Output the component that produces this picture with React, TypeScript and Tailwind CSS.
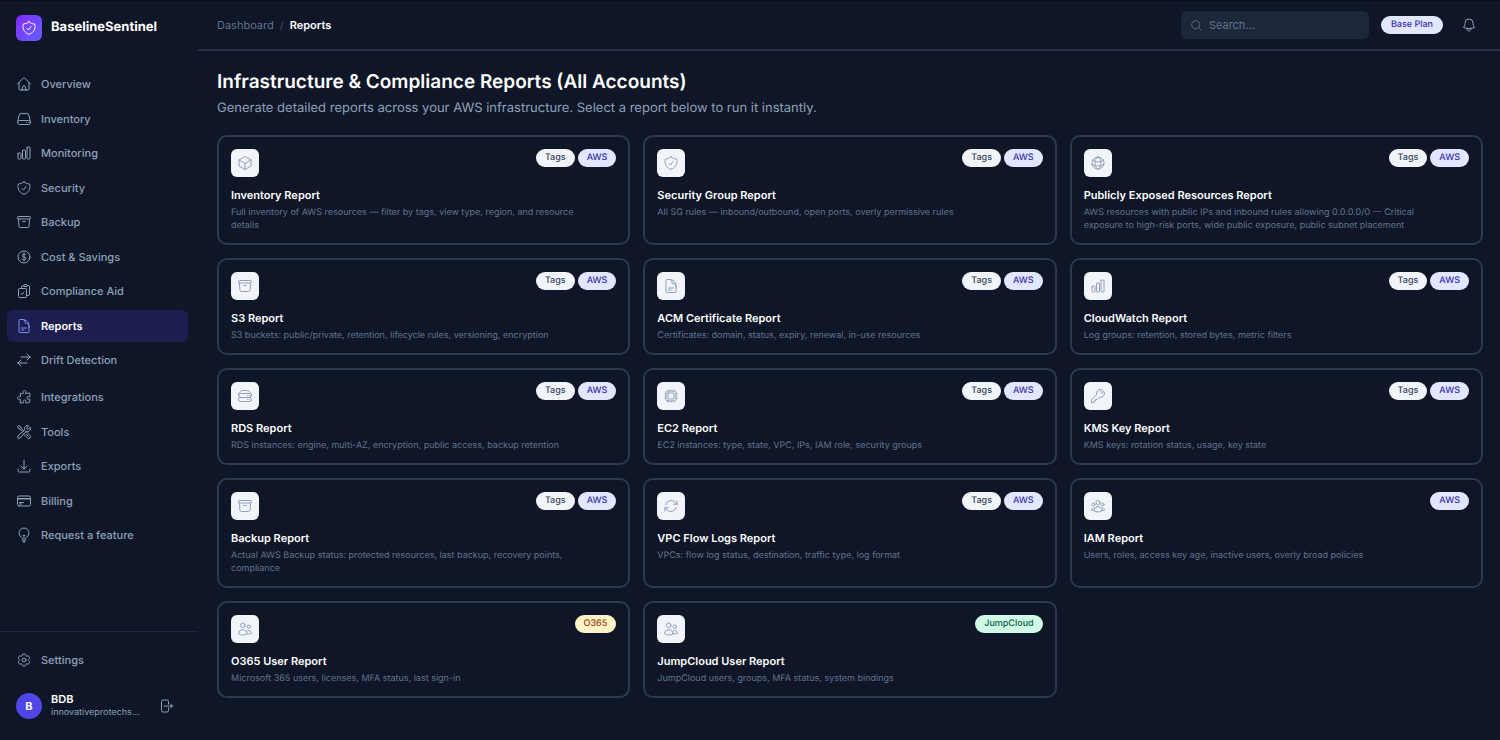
import type { IconType } from "react-icons";
import {
  HiOutlineArchiveBox,
  HiOutlineArrowDownTray,
  HiOutlineArrowPath,
  HiOutlineArrowRightOnRectangle,
  HiOutlineArrowsRightLeft,
  HiOutlineBell,
  HiOutlineChartBar,
  HiOutlineClipboardDocumentCheck,
  HiOutlineCog6Tooth,
  HiOutlineCpuChip,
  HiOutlineCreditCard,
  HiOutlineCube,
  HiOutlineCurrencyDollar,
  HiOutlineDocumentText,
  HiOutlineGlobeAlt,
  HiOutlineHome,
  HiOutlineKey,
  HiOutlineLightBulb,
  HiOutlineMagnifyingGlass,
  HiOutlinePuzzlePiece,
  HiOutlineServer,
  HiOutlineServerStack,
  HiOutlineShieldCheck,
  HiOutlineUserGroup,
  HiOutlineUsers,
  HiOutlineWrenchScrewdriver,
} from "react-icons/hi2";

type NavEntry = { label: string; icon: IconType; active?: boolean };

const primaryNav: NavEntry[] = [
  { label: "Overview", icon: HiOutlineHome },
  { label: "Inventory", icon: HiOutlineServer },
  { label: "Monitoring", icon: HiOutlineChartBar },
  { label: "Security", icon: HiOutlineShieldCheck },
  { label: "Backup", icon: HiOutlineArchiveBox },
  { label: "Cost & Savings", icon: HiOutlineCurrencyDollar },
  { label: "Compliance Aid", icon: HiOutlineClipboardDocumentCheck },
  { label: "Reports", icon: HiOutlineDocumentText, active: true },
  { label: "Drift Detection", icon: HiOutlineArrowsRightLeft },
];

const secondaryNav: NavEntry[] = [
  { label: "Integrations", icon: HiOutlinePuzzlePiece },
  { label: "Tools", icon: HiOutlineWrenchScrewdriver },
  { label: "Exports", icon: HiOutlineArrowDownTray },
  { label: "Billing", icon: HiOutlineCreditCard },
  { label: "Request a feature", icon: HiOutlineLightBulb },
];

type Tag = "Tags" | "AWS" | "O365" | "JumpCloud";

const tagStyles: Record<Tag, string> = {
  Tags: "bg-slate-100 text-slate-700",
  AWS: "bg-indigo-100 text-[#3730a3]",
  O365: "bg-amber-100 text-[#92400e]",
  JumpCloud: "bg-emerald-100 text-[#065f46]",
};

type Report = { title: string; text: string; icon: IconType; tags: Tag[] };

const reports: Report[] = [
  {
    title: "Inventory Report",
    text: "Full inventory of AWS resources — filter by tags, view type, region, and resource details",
    icon: HiOutlineCube,
    tags: ["Tags", "AWS"],
  },
  {
    title: "Security Group Report",
    text: "All SG rules — inbound/outbound, open ports, overly permissive rules",
    icon: HiOutlineShieldCheck,
    tags: ["Tags", "AWS"],
  },
  {
    title: "Publicly Exposed Resources Report",
    text: "AWS resources with public IPs and inbound rules allowing 0.0.0.0/0 — Critical exposure to high-risk ports, wide public exposure, public subnet placement",
    icon: HiOutlineGlobeAlt,
    tags: ["Tags", "AWS"],
  },
  {
    title: "S3 Report",
    text: "S3 buckets: public/private, retention, lifecycle rules, versioning, encryption",
    icon: HiOutlineArchiveBox,
    tags: ["Tags", "AWS"],
  },
  {
    title: "ACM Certificate Report",
    text: "Certificates: domain, status, expiry, renewal, in-use resources",
    icon: HiOutlineDocumentText,
    tags: ["Tags", "AWS"],
  },
  {
    title: "CloudWatch Report",
    text: "Log groups: retention, stored bytes, metric filters",
    icon: HiOutlineChartBar,
    tags: ["Tags", "AWS"],
  },
  {
    title: "RDS Report",
    text: "RDS instances: engine, multi-AZ, encryption, public access, backup retention",
    icon: HiOutlineServerStack,
    tags: ["Tags", "AWS"],
  },
  {
    title: "EC2 Report",
    text: "EC2 instances: type, state, VPC, IPs, IAM role, security groups",
    icon: HiOutlineCpuChip,
    tags: ["Tags", "AWS"],
  },
  {
    title: "KMS Key Report",
    text: "KMS keys: rotation status, usage, key state",
    icon: HiOutlineKey,
    tags: ["Tags", "AWS"],
  },
  {
    title: "Backup Report",
    text: "Actual AWS Backup status: protected resources, last backup, recovery points, compliance",
    icon: HiOutlineArchiveBox,
    tags: ["Tags", "AWS"],
  },
  {
    title: "VPC Flow Logs Report",
    text: "VPCs: flow log status, destination, traffic type, log format",
    icon: HiOutlineArrowPath,
    tags: ["Tags", "AWS"],
  },
  {
    title: "IAM Report",
    text: "Users, roles, access key age, inactive users, overly broad policies",
    icon: HiOutlineUserGroup,
    tags: ["AWS"],
  },
  {
    title: "O365 User Report",
    text: "Microsoft 365 users, licenses, MFA status, last sign-in",
    icon: HiOutlineUsers,
    tags: ["O365"],
  },
  {
    title: "JumpCloud User Report",
    text: "JumpCloud users, groups, MFA status, system bindings",
    icon: HiOutlineUsers,
    tags: ["JumpCloud"],
  },
];

function NavLink({ label, icon: Icon, active }: NavEntry) {
  return (
    <a
      href="#"
      aria-current={active ? "page" : undefined}
      className={
        active
          ? "flex h-8 items-center gap-[9px] rounded-md bg-[#1d1e50] px-[9px] text-[11px] font-semibold text-white"
          : "flex h-8 items-center gap-[9px] rounded-md px-[9px] text-[11px] font-medium text-slate-400"
      }
    >
      <Icon className={active ? "size-4 text-[#818cf8]" : "size-4"} />
      {label}
    </a>
  );
}

function NavList({ items }: { items: NavEntry[] }) {
  return (
    <ul>
      {items.map((item) => (
        <li key={item.label} className="mt-0.5 first:mt-0 even:mt-[3px]">
          <NavLink {...item} />
        </li>
      ))}
    </ul>
  );
}

function Sidebar() {
  return (
    <aside className="flex w-[198px] shrink-0 flex-col">
      <div className="flex items-center gap-[9px] px-4 pt-[14px]">
        <span className="flex size-[26px] items-center justify-center rounded-md bg-gradient-to-br from-violet-600 to-indigo-500 text-white">
          <HiOutlineShieldCheck className="size-4" />
        </span>
        <span className="text-[13px] font-bold text-white">BaselineSentinel</span>
      </div>
      <nav aria-label="Main" className="flex flex-1 flex-col gap-[5px] pt-[27px] pr-[10px] pl-[7px]">
        <NavList items={primaryNav} />
        <NavList items={secondaryNav} />
      </nav>
      <div className="border-t border-slate-800 pt-3 pr-[10px] pb-5 pl-[7px]">
        <NavLink label="Settings" icon={HiOutlineCog6Tooth} />
        <div className="mt-4 flex items-center gap-[9px] pr-[14px] pl-[9px]">
          <span className="flex size-[26px] shrink-0 items-center justify-center rounded-full bg-[#4f46e5] text-[11px] font-bold text-white">
            B
          </span>
          <div className="min-w-0 flex-1">
            <p className="text-[11px] leading-[14px] font-semibold text-white">BDB</p>
            <p className="text-[9px] leading-[14px] whitespace-nowrap text-slate-400">innovativeprotechs...</p>
          </div>
          <button type="button" aria-label="Sign out" className="text-slate-400">
            <HiOutlineArrowRightOnRectangle className="size-4" />
          </button>
        </div>
      </div>
    </aside>
  );
}

function TopBar() {
  return (
    <header className="flex h-[50px] items-center border-b-2 border-[#253043] pr-[23px] pl-[19px]">
      <nav aria-label="Breadcrumb" className="flex flex-1 gap-[6px] text-[11px]">
        <a href="#" className="text-slate-500">
          Dashboard
        </a>
        <span className="text-slate-600">/</span>
        <span className="font-semibold text-white">Reports</span>
      </nav>
      <label className="flex h-7 w-[188px] items-center gap-[6px] rounded-md bg-[#1c2739] px-[9px] text-slate-500">
        <HiOutlineMagnifyingGlass className="size-[13px] shrink-0" />
        <input
          type="search"
          aria-label="Search"
          placeholder="Search..."
          className="w-full min-w-0 bg-transparent text-[11px] text-white outline-none placeholder:text-slate-500"
        />
      </label>
      <span className="ml-3 rounded-full bg-indigo-100 px-[10px] text-[9px] leading-[18px] font-medium text-[#3730a3]">
        Base Plan
      </span>
      <button type="button" aria-label="Notifications" className="ml-[18px] text-slate-400">
        <HiOutlineBell className="size-4" />
      </button>
    </header>
  );
}

function ReportCard({ title, text, icon: Icon, tags }: Report) {
  return (
    <a href="#" className="block rounded-[10px] border-2 border-[#2d3a4d] px-3 pt-3 pb-[11px]">
      <div className="flex items-start justify-between">
        <span className="flex size-7 items-center justify-center rounded-md bg-slate-100 text-slate-400">
          <Icon className="size-4" />
        </span>
        <span className="flex gap-[3px]">
          {tags.map((tag) => (
            <span
              key={tag}
              className={`rounded-full px-[9px] text-[9px] leading-[18px] font-medium ${tagStyles[tag]}`}
            >
              {tag}
            </span>
          ))}
        </span>
      </div>
      <h2 className="mt-[9px] text-[11px] leading-[18px] font-semibold text-white">{title}</h2>
      <p className="mt-0.5 pr-5 text-[9px] leading-[13px] text-slate-500">{text}</p>
    </a>
  );
}

export default function App() {
  return (
    <div className="flex min-h-screen border-t border-[#090d1a] bg-[#0e1628] font-[Inter,sans-serif] [text-rendering:geometricPrecision]">
      <Sidebar />
      <div className="min-w-0 flex-1">
        <TopBar />
        <main className="pt-[17px] pr-[17px] pb-6 pl-[19px]">
          <h1 className="text-[19px] leading-7 font-semibold text-white">
            Infrastructure &amp; Compliance Reports (All Accounts)
          </h1>
          <p className="mt-0.5 text-[13px] leading-5 text-slate-400">
            Generate detailed reports across your AWS infrastructure. Select a report below to run it instantly.
          </p>
          <div className="mt-[17px] grid grid-cols-3 gap-[13px]">
            {reports.map((report) => (
              <ReportCard key={report.title} {...report} />
            ))}
          </div>
        </main>
      </div>
    </div>
  );
}
